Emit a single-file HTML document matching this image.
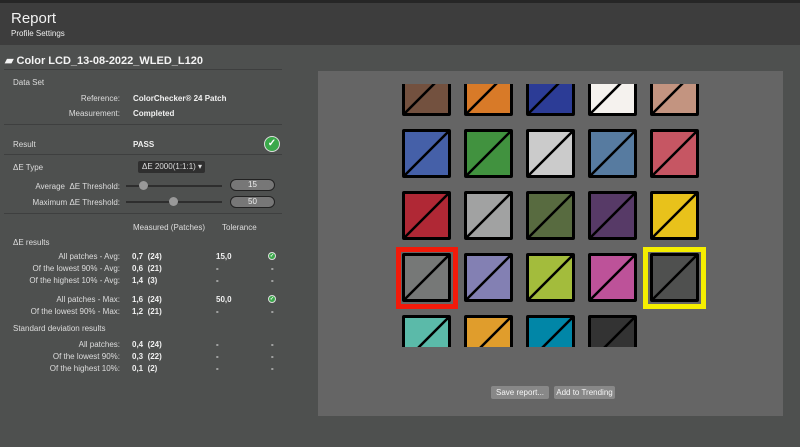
<!DOCTYPE html>
<html><head><meta charset="utf-8"><style>
*{margin:0;padding:0;box-sizing:border-box}
body{width:800px;height:447px;overflow:hidden;background:#4e504f;font-family:"Liberation Sans",sans-serif;color:#e6e6e6;position:relative}
.a{position:absolute;white-space:nowrap}
.hdr{position:absolute;left:0;top:0;width:800px;height:45px;background:#3d3d3d;border-top:3px solid #262626}
.sep{position:absolute;left:4px;width:278px;height:1px;background:#3e3f3f}
.r{text-align:right;font-size:8px;color:#ddd}
.b{font-weight:bold;font-size:8px;color:#f0f0f0}
.s{font-size:8px;color:#ddd}
.panel{position:absolute;left:318px;top:71px;width:465px;height:345px;background:#656565;overflow:hidden}
.p{position:absolute;width:49px;height:49px;border:3px solid #000;border-radius:2px;overflow:hidden}
.p svg{position:absolute;left:-3px;top:-3px}
.btn{position:absolute;top:315px;height:13px;background:#888;border-radius:2px;font-size:8px;color:#f4f4f4;text-align:center;line-height:13px}
.ok{position:absolute;border-radius:50%;background:#3aa84a;border:1px solid #ddd;color:#fff;text-align:center;font-weight:bold}
</style></head><body>
<div class="hdr"></div>
<div class="a" style="left:11px;top:10px;font-size:15px;color:#f2f2f2">Report</div>
<div class="a" style="left:11px;top:29px;font-size:8px;color:#eee">Profile Settings</div>
<div class="a" style="left:5px;top:54px;font-size:11px;font-weight:bold;color:#f4f4f4">▰ Color LCD_13-08-2022_WLED_L120</div>
<div class="sep" style="top:69px"></div>
<div class="a s" style="left:13px;top:78px">Data Set</div>
<div class="a r" style="left:40px;width:80px;top:94px">Reference:</div>
<div class="a b" style="left:133px;top:94px">ColorChecker® 24 Patch</div>
<div class="a r" style="left:40px;width:80px;top:109px">Measurement:</div>
<div class="a b" style="left:133px;top:109px">Completed</div>
<div class="sep" style="top:124px"></div>
<div class="a s" style="left:13px;top:140px">Result</div>
<div class="a b" style="left:133px;top:140px">PASS</div>
<div class="ok" style="left:264px;top:136px;width:16px;height:16px;font-size:10px;line-height:14px">✓</div>
<div class="sep" style="top:154px"></div>
<div class="a s" style="left:13px;top:163px">ΔE Type</div>
<div class="a" style="left:138px;top:161px;width:67px;height:12px;background:#2f2f2f;border-radius:2px;font-size:8px;line-height:12px;padding-left:4px;color:#ddd">ΔE 2000(1:1:1) ▾</div>
<div class="a r" style="left:20px;width:100px;top:182px">Average &nbsp;ΔE Threshold:</div>
<div class="a" style="left:126px;top:185px;width:96px;height:2px;background:#2e2e2e"></div>
<div class="a" style="left:139px;top:181px;width:9px;height:9px;border-radius:50%;background:#999"></div>
<div class="a" style="left:230px;top:179px;width:45px;height:12px;border-radius:6px;background:#777;border:1px solid #222;font-size:8px;text-align:center;line-height:10px;color:#eee">15</div>
<div class="a r" style="left:20px;width:100px;top:198px">Maximum ΔE Threshold:</div>
<div class="a" style="left:126px;top:201px;width:96px;height:2px;background:#2e2e2e"></div>
<div class="a" style="left:169px;top:197px;width:9px;height:9px;border-radius:50%;background:#999"></div>
<div class="a" style="left:230px;top:196px;width:45px;height:12px;border-radius:6px;background:#777;border:1px solid #222;font-size:8px;text-align:center;line-height:10px;color:#eee">50</div>
<div class="sep" style="top:213px"></div>
<div class="a s" style="left:133px;top:223px">Measured (Patches)</div>
<div class="a s" style="left:222px;top:223px">Tolerance</div>
<div class="a s" style="left:13px;top:238px">ΔE results</div>

<div class="a r" style="left:0;width:120px;top:252px">All patches - Avg:</div><div class="a b" style="left:132px;top:252px">0,7 &nbsp;(24)</div><div class="a b" style="left:216px;top:252px">15,0</div><div class="ok" style="left:268px;top:252px;width:8px;height:8px;font-size:5px;line-height:7px">✓</div>
<div class="a r" style="left:0;width:120px;top:264px">Of the lowest 90% - Avg:</div><div class="a b" style="left:132px;top:264px">0,6 &nbsp;(21)</div><div class="a b" style="left:216px;top:264px">-</div><div class="a b" style="left:271px;top:264px">-</div>
<div class="a r" style="left:0;width:120px;top:276px">Of the highest 10% - Avg:</div><div class="a b" style="left:132px;top:276px">1,4 &nbsp;(3)</div><div class="a b" style="left:216px;top:276px">-</div><div class="a b" style="left:271px;top:276px">-</div>
<div class="a r" style="left:0;width:120px;top:295px">All patches - Max:</div><div class="a b" style="left:132px;top:295px">1,6 &nbsp;(24)</div><div class="a b" style="left:216px;top:295px">50,0</div><div class="ok" style="left:268px;top:295px;width:8px;height:8px;font-size:5px;line-height:7px">✓</div>
<div class="a r" style="left:0;width:120px;top:307px">Of the lowest 90% - Max:</div><div class="a b" style="left:132px;top:307px">1,2 &nbsp;(21)</div><div class="a b" style="left:216px;top:307px">-</div><div class="a b" style="left:271px;top:307px">-</div>
<div class="a s" style="left:13px;top:324px">Standard deviation results</div>
<div class="a r" style="left:0;width:120px;top:340px">All patches:</div><div class="a b" style="left:132px;top:340px">0,4 &nbsp;(24)</div><div class="a b" style="left:216px;top:340px">-</div><div class="a b" style="left:271px;top:340px">-</div>
<div class="a r" style="left:0;width:120px;top:352px">Of the lowest 90%:</div><div class="a b" style="left:132px;top:352px">0,3 &nbsp;(22)</div><div class="a b" style="left:216px;top:352px">-</div><div class="a b" style="left:271px;top:352px">-</div>
<div class="a r" style="left:0;width:120px;top:364px">Of the highest 10%:</div><div class="a b" style="left:132px;top:364px">0,1 &nbsp;(2)</div><div class="a b" style="left:216px;top:364px">-</div><div class="a b" style="left:271px;top:364px">-</div>

<div class="panel">
 <div style="position:absolute;left:0;top:13px;width:465px;height:263px;overflow:hidden" id="g">
 </div>
 <div class="btn" style="left:173px;width:58px">Save report...</div>
 <div class="btn" style="left:236px;width:61px">Add to Trending</div>
</div>
<script>
var c=["#73513f","#d87a28","#2c3c96","#f5f2ee","#c39480",
"#4560a8","#41923f","#cbcbcb","#577ba0","#c65663",
"#b02835","#a1a2a2","#586b40","#573a67","#e8c21b",
"#767877","#8380b3","#a3bc3c","#bd5299","#4f504f",
"#5bbaa9","#e09d2c","#0186a7","#333333"];
var g=document.getElementById('g'),h='';
for(var i=0;i<24;i++){var r=Math.floor(i/5),k=i%5;
var x=84+k*62,y=-17+r*62;
h+='<div class="p" style="left:'+x+'px;top:'+y+'px;background:'+c[i]+'"><svg width="49" height="49"><line x1="2" y1="47" x2="47" y2="2" stroke="#000" stroke-width="2.5"/></svg></div>';}
h+='<div style="position:absolute;left:78px;top:163px;width:62px;height:62px;border:5px solid #f21a0a"></div>';
h+='<div style="position:absolute;left:325px;top:163px;width:63px;height:62px;border:5px solid #f5ee00"></div>';
g.innerHTML=h;
</script>
</body></html>
